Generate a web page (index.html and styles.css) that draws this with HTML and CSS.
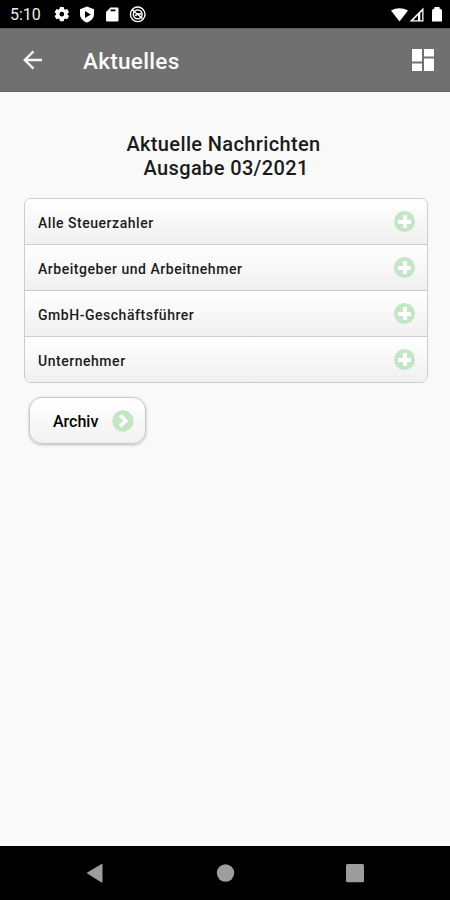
FILE: index.html
```html
<!DOCTYPE html>
<html lang="de">
<head>
<meta charset="utf-8">
<title>Aktuelles</title>
<link rel="stylesheet" href="styles.css">
</head>
<body>
<div class="status">
  <span class="time">5:10</span>
  <svg class="status-left" width="94" height="20" viewBox="0 0 94 20" fill="#fff">
    <path fill-rule="evenodd" transform="translate(.3 .3) scale(.94)" d="M6 3h4l.5 2 1.200.7 2-.7 2 3.400-1.600 1.400v1.400l1.600 1.300-2 3.400-2-.7-1.200.7-.5 2H6l-.5-2-1.200-.7-2 .7-2-3.400 1.600-1.300V9.800L.3 8.400l2-3.400 2 .7L5.500 5zM8 8a2.500 2.500 0 1 0 0 5 2.500 2.500 0 0 0 0-5z"/>
    <path fill-rule="evenodd" d="M33 2.500l7 2.700v5c0 4-3 6.900-7 8.300-4-1.400-7-4.300-7-8.300v-5zM31 7v7l5.800-3.500z"/>
    <path fill-rule="evenodd" d="M56.500 3.500H63.500q1 0 1 1v12q0 1-1 1H53q-1 0-1-1V8zM56.500 5.500v1.800h5V5.500z"/>
    <g fill="none" stroke="#fff"><circle cx="83.700" cy="10.300" r="7.300" stroke-width="1.400"/><circle cx="83.700" cy="10.300" r="4.400" stroke-width="1.500"/><path d="M78.500 6l10 8.500M81.500 12c1-4 3-1 5.500-2.500" stroke-width="1.600"/></g>
  </svg>
  <svg class="status-right" width="52" height="18" viewBox="0 0 52 18" fill="#fff">
    <path d="M1 4.500Q9.500 .2 18 4.500L9.500 15.500z"/>
    <path fill-rule="evenodd" d="M19.500 15.500L33.500 1.500v14zM28 9.300l-4.800 4.900H28zM30.300 7v7.200h1.900V5.200z"/>
    <path d="M44.500 1h5v1.500q2.500.3 2.500 2.500v10.500H42V5q0-2.200 2.500-2.500z"/>
  </svg>
</div>
<header class="bar">
  <svg class="back" width="20" height="20" viewBox="0 0 20 20"><path d="M19 10H2M10.500 1.300L1.800 10l8.700 8.700" fill="none" stroke="#f5f5f5" stroke-width="2.400"/></svg>
  <h1>Aktuelles</h1>
  <svg class="dash" width="22" height="22" viewBox="0 0 22 22" fill="#fff"><path d="M0 0h10v12.500H0zM12 0h10v7.500H12zM0 14.500h10V22H0zM12 9.500h10V22H12z"/></svg>
</header>
<main>
  <h2>Aktuelle Nachrichten<br>&nbsp;Ausgabe 03/2021</h2>
  <ul class="list">
    <li><span>Alle Steuerzahler</span><i class="plus"></i></li>
    <li><span>Arbeitgeber und Arbeitnehmer</span><i class="plus"></i></li>
    <li><span>GmbH-Geschäftsführer</span><i class="plus"></i></li>
    <li><span>Unternehmer</span><i class="plus"></i></li>
  </ul>
  <a class="archive"><span>Archiv</span>
    <svg width="22" height="22" viewBox="0 0 22 22"><circle cx="11" cy="11" r="10.700" fill="#c3e6c5"/><path d="M8.200 5.300l5.500 5.500-5.500 5.500" fill="none" stroke="#fff" stroke-width="3.600"/></svg>
  </a>
</main>
<nav class="nav">
  <svg width="450" height="54" viewBox="0 0 450 54" fill="#9d9d9d"><path d="M86.500 27L101.500 18q1-.5 1 .6v17.300q0 1-1 .5z"/><circle cx="225.500" cy="27" r="8.700"/><rect x="346" y="18" width="18" height="18.300" rx="1.500"/></svg>
</nav>
</body>
</html>
```
FILE: styles.css
```css
* { box-sizing: border-box; }
body {
  margin: 0;
  width: 450px;
  height: 900px;
  display: flex;
  flex-direction: column;
  background: #f9f9f9;
  color: #1b1b1b;
  font-family: Roboto, "Liberation Sans", sans-serif;
  overflow: hidden;
}
.status {
  height: 28px;
  background: #000;
  color: #eee;
  display: flex;
  padding: 0 8px 0 10px;
}
.time { width: 44px; font-size: 16px; line-height: 30px; }
.status-left { margin-top: 4px; }
.status-right { margin: 6px 0 0 auto; }
.bar {
  height: 64px;
  background: #707070;
  border-top: 1px solid #5e5e5e;
  border-bottom: 1px solid #606060;
  display: flex;
  align-items: center;
  padding: 0 16px 0 23px;
  color: #fafafa;
}
.bar h1 {
  margin: 2px 0 0 40px;
  font-size: 22.500px;
  font-weight: 500;
  letter-spacing: .3px;
}
.dash { margin-left: auto; }
main { flex: 1; padding: 40px 22px 0 24px; }
h2 {
  margin: 0 0 18px;
  padding-right: 5px;
  font-size: 20px;
  line-height: 24px;
  font-weight: 500;
  letter-spacing: .37px;
  text-align: center;
}
.list {
  margin: 0;
  padding: 0;
  list-style: none;
  border: 1px solid #ccc;
  border-radius: 7px;
  overflow: hidden;
}
.list li {
  height: 46px;
  display: flex;
  align-items: center;
  justify-content: space-between;
  padding: 0 12px 0 13px;
  font-size: 14px;
  font-weight: 500;
  letter-spacing: .53px;
  background: linear-gradient(#fff, #f0f0f0);
  border-bottom: 1px solid #ccc;
}
.list li:last-child { height: 45px; border-bottom: 0; }
.list span { padding-top: 2px; }
.plus {
  width: 21px;
  height: 21px;
  border-radius: 50%;
  background:
    linear-gradient(#fff, #fff) center / 13px 4px no-repeat,
    linear-gradient(#fff, #fff) center / 4px 13px no-repeat,
    #c3e6c5;
}
.archive {
  width: 117px;
  height: 47px;
  margin: 14px 0 0 5px;
  padding: 0 11px 0 23px;
  display: flex;
  align-items: center;
  justify-content: space-between;
  border: 1px solid #c8c8c8;
  border-radius: 13px;
  background: linear-gradient(#fff, #f2f2f2);
  box-shadow: 0 1px 3px rgba(0, 0, 0, .25);
  color: #000;
  font-size: 16px;
  font-weight: 500;
}
.archive span { padding-top: 1px; }
.nav { height: 54px; background: #000; }
.nav svg { display: block; }
```
